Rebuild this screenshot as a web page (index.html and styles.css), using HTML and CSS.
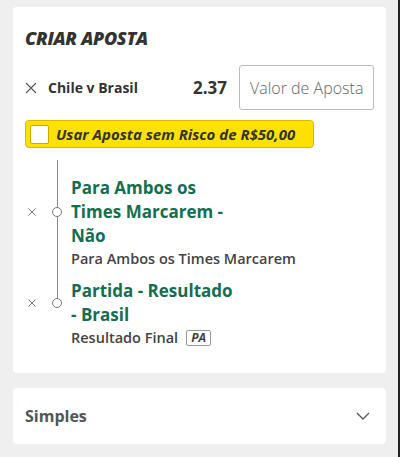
FILE: index.html
```html
<!DOCTYPE html>
<html lang="pt">
<head>
<meta charset="UTF-8">
<meta name="viewport" content="width=device-width, initial-scale=1.0">
<title>Criar Aposta</title>
<link rel="stylesheet" href="styles.css">
</head>
<body>
<div class="page">
    <div class="card builder">
        <h2 class="title">CRIAR APOSTA</h2>

        <div class="match-row">
            <svg class="remove" width="12" height="12" viewBox="0 0 12 12"><path d="M1 1 L11 11 M11 1 L1 11" stroke="#555" stroke-width="1.1"/></svg>
            <span class="match-name">Chile v Brasil</span>
            <span class="odds">2.37</span>
            <input type="text" class="stake" placeholder="Valor de Aposta">
        </div>

        <label class="free-bet">
            <span class="check"></span>
            <span>Usar Aposta sem Risco de R$50,00</span>
        </label>

        <div class="legs">
            <div class="leg">
                <div class="leg-head">
                    <svg class="leg-remove" width="8" height="8" viewBox="0 0 8 8"><path d="M0.5 0.5 L7.5 7.5 M7.5 0.5 L0.5 7.5" stroke="#777" stroke-width="1"/></svg>
                    <span class="dot"></span>
                    <div class="leg-title">Para Ambos os<br>Times Marcarem -<br>Não</div>
                </div>
                <div class="leg-market">Para Ambos os Times Marcarem</div>
            </div>
            <div class="leg">
                <div class="leg-head">
                    <svg class="leg-remove" width="8" height="8" viewBox="0 0 8 8"><path d="M0.5 0.5 L7.5 7.5 M7.5 0.5 L0.5 7.5" stroke="#777" stroke-width="1"/></svg>
                    <span class="dot"></span>
                    <div class="leg-title">Partida - Resultado<br>- Brasil</div>
                </div>
                <div class="leg-market">Resultado Final <span class="badge">PA</span></div>
            </div>
        </div>
    </div>

    <div class="card simples">
        <span>Simples</span>
        <svg width="14" height="9" viewBox="0 0 14 9"><path d="M1 1 L7 7 L13 1" fill="none" stroke="#555" stroke-width="1.3"/></svg>
    </div>
</div>
</body>
</html>
```

FILE: styles.css
```css
body {
    margin: 0;
    padding: 0;
    background: #efefef;
    font-family: "Open Sans", "Noto Sans", sans-serif;
    color: #333;
}
.page {
    padding: 7px 12px 13px 13px;
    border-right: 2px solid #222;
    min-height: 457px;
    box-sizing: border-box;
}
.card {
    background: #fff;
    border-radius: 4px;
}
.builder {
    padding: 18px 12px 0 12px;
    height: 366px;
    box-sizing: border-box;
}
.title {
    margin: 0;
    font-size: 18px;
    font-style: italic;
    font-weight: 800;
    color: #333;
    line-height: 26px;
    letter-spacing: -0.3px;
}
.match-row {
    display: flex;
    align-items: center;
    margin-top: 14px;
}
.remove {
    margin-right: 11px;
}
.match-name {
    font-size: 14px;
    font-weight: 700;
    color: #333;
    flex: 1;
}
.odds {
    font-size: 17px;
    font-weight: 700;
    color: #333;
    margin-right: 12px;
}
.stake {
    width: 135px;
    height: 45px;
    box-sizing: border-box;
    border: 1px solid #bbb;
    border-radius: 3px;
    padding: 0 10px;
    font-family: "Open Sans", sans-serif;
    font-size: 16px;
    font-weight: 300;
}
.stake::placeholder {
    color: #666;
}
.free-bet {
    display: inline-flex;
    align-items: center;
    gap: 7px;
    margin-top: 10px;
    width: 289px;
    height: 28px;
    box-sizing: border-box;
    padding: 0 4px;
    background: #ffe100;
    border: 1px solid #d9b800;
    border-radius: 4px;
    font-size: 15px;
    font-style: italic;
    font-weight: 700;
    color: #333;
}
.check {
    width: 17px;
    height: 17px;
    background: #fff;
    border: 1px solid #c9a800;
    border-radius: 2px;
}
.legs {
    position: relative;
    margin-top: 11px;
    padding-top: 16px;
}
.legs::before {
    content: "";
    position: absolute;
    left: 32px;
    top: 0;
    height: 140px;
    width: 1px;
    background: #888;
}
.leg {
    margin-bottom: 9px;
}
.leg-head {
    display: flex;
    align-items: center;
}
.leg-remove {
    margin-left: 3px;
}
.dot {
    position: relative;
    width: 8px;
    height: 8px;
    margin: 0 9px 0 16px;
    border: 1px solid #777;
    border-radius: 50%;
    background: #fff;
}
.leg-title {
    font-size: 17px;
    font-weight: 700;
    color: #146e4f;
    line-height: 24px;
}
.leg-market {
    padding-left: 46px;
    font-size: 14.5px;
    font-weight: 600;
    color: #444;
    line-height: 22px;
    display: flex;
    align-items: center;
    gap: 8px;
}
.badge {
    font-size: 12px;
    font-weight: 700;
    font-style: italic;
    border: 1px solid #999;
    border-radius: 2px;
    padding: 0 4px;
    line-height: 14px;
}
.simples {
    margin-top: 15px;
    height: 56px;
    display: flex;
    align-items: center;
    justify-content: space-between;
    padding: 0 16px 0 12px;
    font-size: 16px;
    font-weight: 700;
    color: #555;
}
```
